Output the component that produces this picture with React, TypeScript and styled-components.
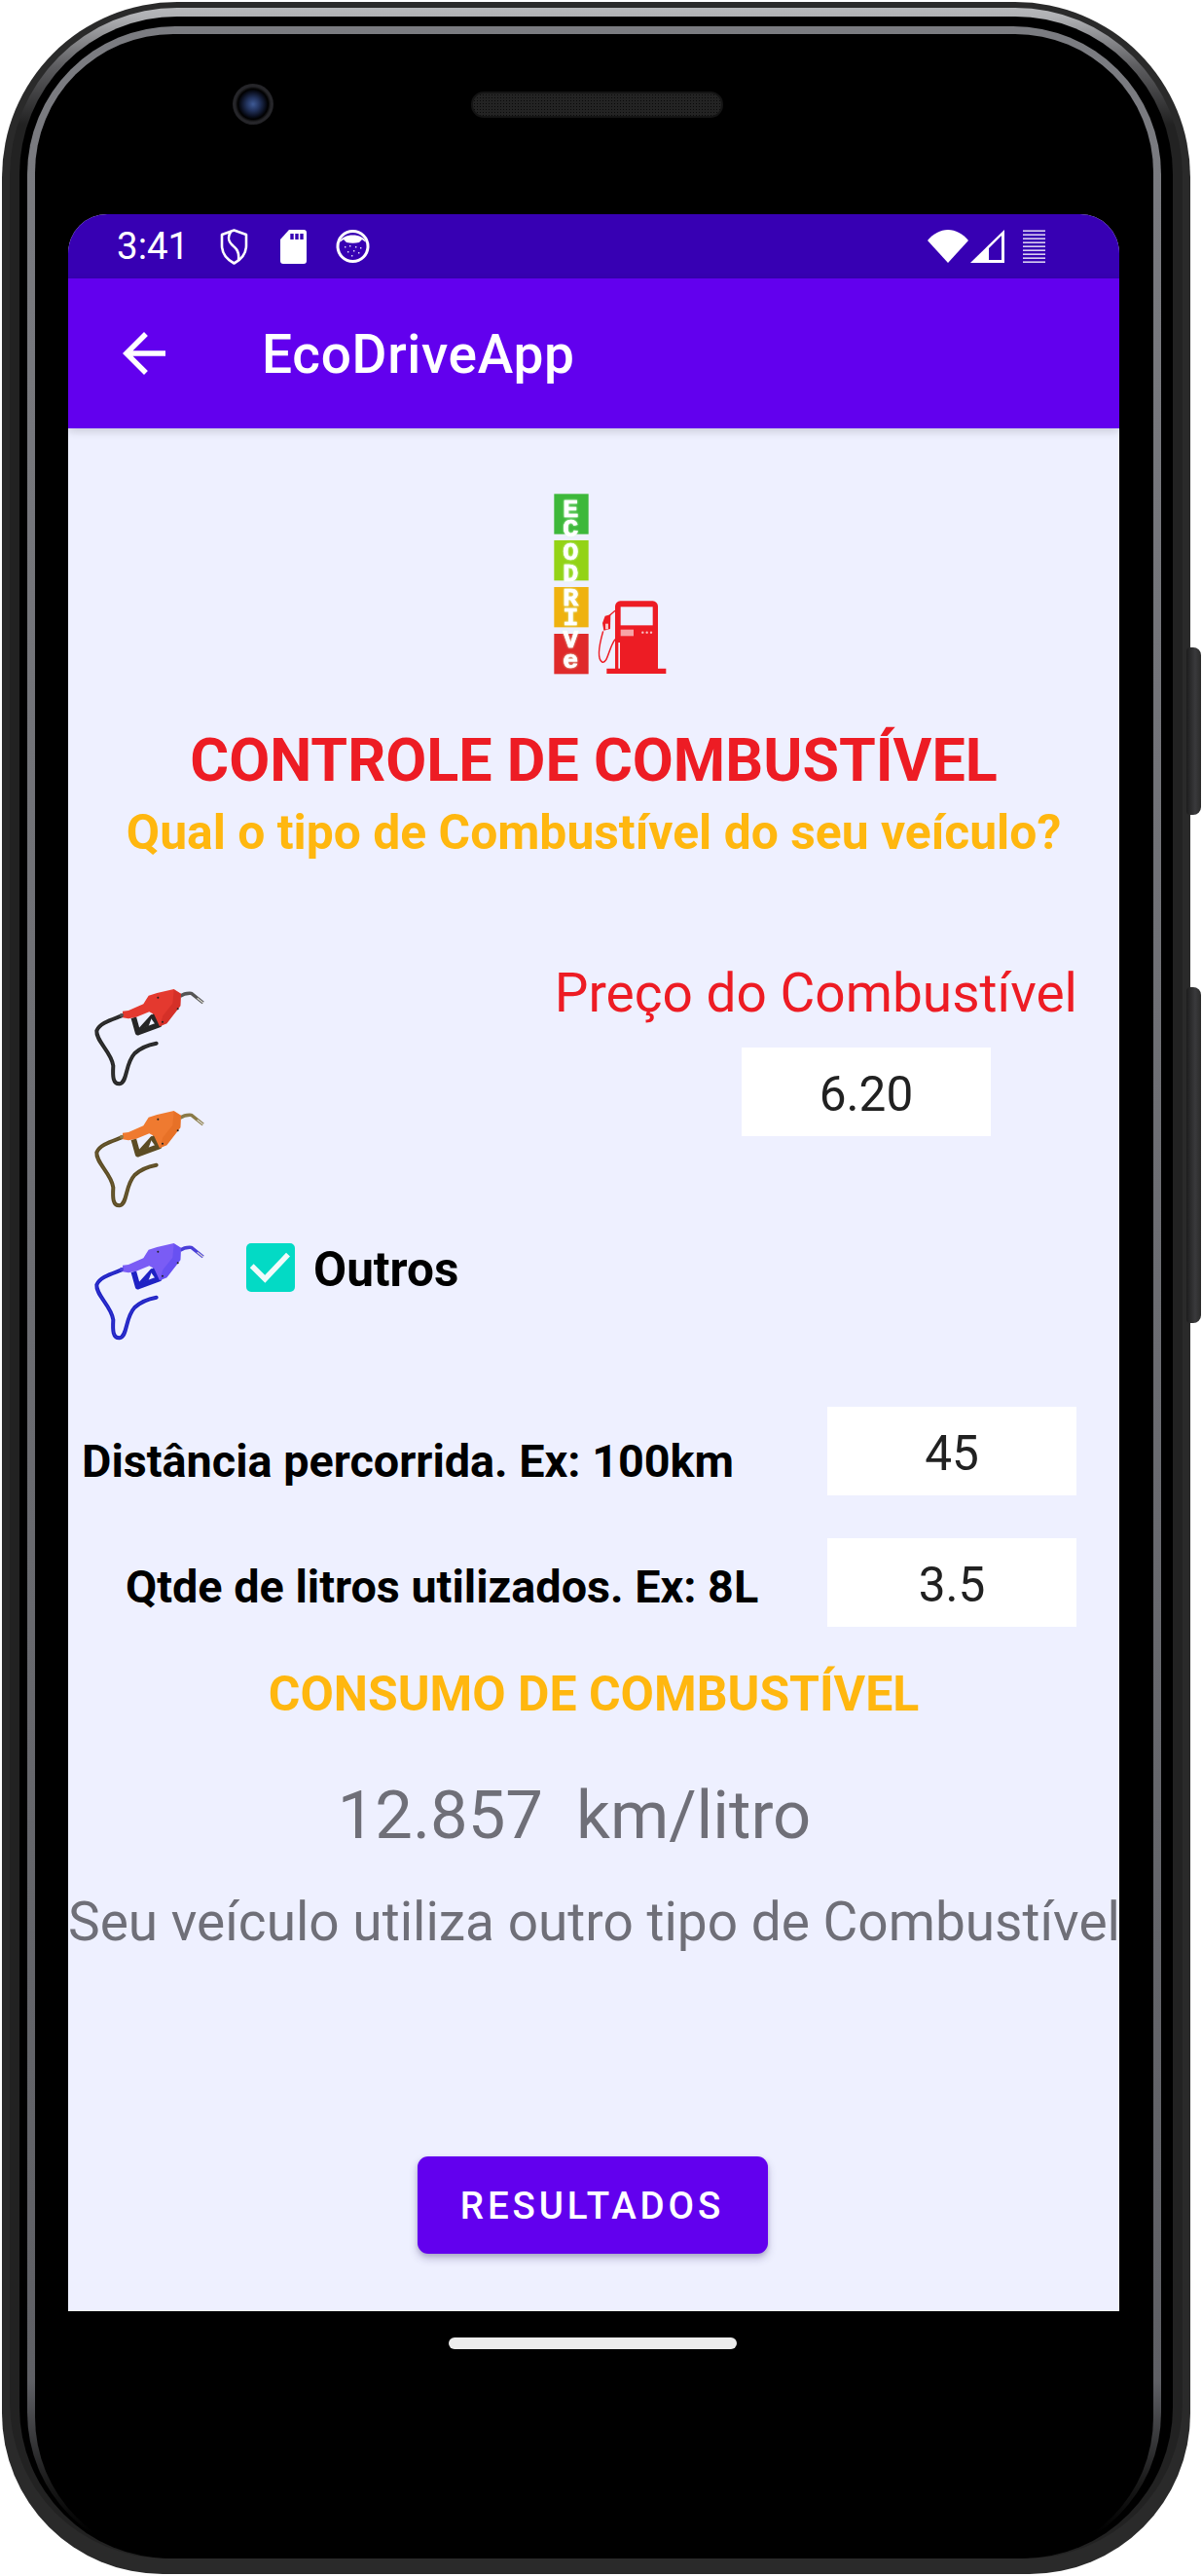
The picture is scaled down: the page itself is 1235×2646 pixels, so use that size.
import { createGlobalStyle, styled } from "styled-components";

const GlobalStyle = createGlobalStyle`
  html, body {
    margin: 0;
    padding: 0;
    background: #fff;
  }
  * {
    box-sizing: border-box;
  }
`;

const FONT = `"Roboto", "Liberation Sans", sans-serif`;

const Page = styled.div`
  width: 1235px;
  height: 2646px;
  padding: 2px 0 0 2px;
  font-family: ${FONT};
  overflow: hidden;
`;

const Shell = styled.div`
  position: relative;
  width: 1221px;
  height: 2642px;
  padding: 6px 8px 16px;
  background: #2a2a2a;
  border-radius: 180px 180px 165px 165px;
`;

const SideKey = styled.div<{ $top: number; $height: number; $width: number }>`
  position: absolute;
  top: ${(p) => p.$top}px;
  right: -${(p) => p.$width}px;
  width: ${(p) => p.$width + 4}px;
  height: ${(p) => p.$height}px;
  border-radius: 4px 8px 8px 4px;
  background: linear-gradient(90deg, #1d1d1d, #3a3a3c 60%, #2a2a2a);
  z-index: 0;
`;

const Rim = styled.div`
  position: relative;
  z-index: 1;
  height: 100%;
  padding: 9px 10px 0;
  border-radius: 172px 172px 160px 160px;
  background: linear-gradient(180deg, #b6b7ba 0, #b0b1b4 9px, #5d5d60 60px, #222 120px);
`;

const RimGap = styled.div`
  height: 100%;
  padding: 10px 12px 0 8px;
  border-radius: 162px 162px 155px 155px;
  background: #000;
`;

const GreyEdge = styled.div`
  height: 100%;
  padding: 8px 8px 0;
  border-radius: 152px 152px 150px 150px;
  background: linear-gradient(180deg, #7b7c81 0, #5f6065 93%, #1a1a1a 97%, #000 99%);
`;

const Bezel = styled.div`
  height: 100%;
  display: flex;
  flex-direction: column;
  border-radius: 142px 142px 145px 145px;
  background: #000;
`;

const SensorRow = styled.div`
  display: flex;
  align-items: center;
  gap: 203px;
  padding: 51px 0 92px 203px;
`;

const Camera = styled.div`
  width: 42px;
  height: 42px;
  border-radius: 50%;
  background: radial-gradient(circle at 50% 50%, #3f5a95 0, #23345f 22%, #0b1020 42%, #000 52%, #26262a 62%, #1e1e22 100%);
`;

const Speaker = styled.div`
  width: 259px;
  height: 27px;
  border-radius: 13px;
  border: 2px solid #141414;
  background-color: #232323;
  background-image: radial-gradient(#0a0a0a 1px, transparent 1px);
  background-size: 3px 3px;
`;

const Screen = styled.div`
  width: 1080px;
  height: 2154px;
  margin-left: 34px;
  display: flex;
  flex-direction: column;
  border-radius: 40px 40px 0 0;
  overflow: hidden;
  background: #eef0ff;
`;

const StatusBar = styled.div`
  height: 66px;
  flex: none;
  display: flex;
  align-items: center;
  padding: 0 76px 0 50px;
  background: #3700b3;
  color: #fff;
`;

const Clock = styled.span`
  font-size: 38.5px;
  line-height: 66px;
`;

const StatusIcon = styled.svg<{ $left: number }>`
  display: block;
  flex: none;
  margin-left: ${(p) => p.$left}px;
`;

const StatusRight = styled.div`
  margin-left: auto;
  display: flex;
  align-items: center;
`;

const AppBar = styled.div`
  position: relative;
  z-index: 2;
  height: 154px;
  flex: none;
  display: flex;
  align-items: center;
  padding-left: 45px;
  background: #6200ee;
  box-shadow: 0 3px 9px rgba(0, 0, 0, 0.16);
  color: #fff;
`;

const BackIcon = styled.svg`
  display: block;
  flex: none;
  width: 66px;
  height: 66px;
  fill: #fff;
`;

const AppTitle = styled.h1`
  margin: 2px 0 0 88px;
  font-size: 55px;
  line-height: 64px;
  font-weight: 500;
  letter-spacing: 0.0125em;
`;

const Content = styled.main`
  flex: 1;
  display: flex;
  flex-direction: column;
  align-items: stretch;
`;

const LogoSvg = styled.svg`
  display: block;
  width: 120px;
  height: 190px;
  margin: 65px 0 0 497px;
`;

const LogoWord = styled.text`
  font-family: "Liberation Mono", monospace;
  font-weight: 700;
  font-size: 80px;
  fill: #fff;
  stroke: #fff;
  stroke-width: 2px;
  text-anchor: middle;
  filter: drop-shadow(0 0 3px rgba(215, 255, 215, 0.9));
`;

const Heading = styled.h2<{ $size: number; $line: number; $top: number; $color: string }>`
  margin: ${(p) => p.$top}px 0 0;
  text-align: center;
  font-size: ${(p) => p.$size}px;
  line-height: ${(p) => p.$line}px;
  font-weight: 700;
  color: ${(p) => p.$color};
  white-space: nowrap;
`;

const FuelSection = styled.section`
  margin-top: 102px;
  display: flex;
  justify-content: space-between;
`;

const FuelList = styled.div`
  display: flex;
  flex-direction: column;
  gap: 10px;
  padding: 23px 0 0 20px;
`;

const FuelRow = styled.div<{ $gap?: number }>`
  display: flex;
  align-items: flex-start;
  margin-top: ${(p) => p.$gap ?? 0}px;
`;

const NozzleSvg = styled.svg`
  display: block;
  flex: none;
  width: 130px;
  height: 115px;
`;

const CheckBox = styled.div`
  width: 50px;
  height: 50px;
  margin: 6px 0 0 33px;
  border-radius: 5px;
  background: #03dac5;
`;

const CheckLabel = styled.span`
  margin: 4px 0 0 19px;
  font-size: 49.5px;
  line-height: 58px;
  font-weight: 700;
  color: #000;
`;

const PriceColumn = styled.div`
  display: flex;
  flex-direction: column;
  align-items: flex-end;
  padding-right: 43px;
`;

const PriceLabel = styled.div`
  margin-top: 1px;
  font-size: 55px;
  line-height: 64px;
  color: #ed1c24;
  white-space: nowrap;
`;

const Field = styled.div<{ $right?: number; $top?: number }>`
  width: 256px;
  height: 91px;
  flex: none;
  margin-top: ${(p) => p.$top ?? 0}px;
  margin-right: ${(p) => p.$right ?? 0}px;
  padding-top: 5px;
  display: flex;
  align-items: center;
  justify-content: center;
  background: #fff;
  font-size: 49.5px;
  color: #212121;
`;

const FormRows = styled.div`
  margin-top: 59px;
  display: flex;
  flex-direction: column;
  gap: 44px;
`;

const FormRow = styled.div<{ $indent: number; $drop: number }>`
  display: flex;
  align-items: flex-start;
  justify-content: space-between;
  padding: 0 44px 0 ${(p) => p.$indent}px;

  & > span {
    margin-top: ${(p) => p.$drop}px;
  }
`;

const FormLabel = styled.span`
  font-size: 46.75px;
  line-height: 52px;
  font-weight: 700;
  color: #000;
  white-space: nowrap;
`;

const ResultText = styled.div<{ $size: number; $line: number; $top: number; $shift?: number }>`
  margin-top: ${(p) => p.$top}px;
  padding-right: ${(p) => p.$shift ?? 0}px;
  text-align: center;
  font-size: ${(p) => p.$size}px;
  line-height: ${(p) => p.$line}px;
  color: #6f6f78;
  white-space: pre;
`;

const ResultButton = styled.button`
  align-self: center;
  width: 360px;
  height: 100px;
  margin: 209px 3px 0 0;
  padding: 0;
  border: 0;
  border-radius: 11px;
  background: #6200ee;
  box-shadow: 0 5px 9px rgba(60, 50, 110, 0.28), 0 2px 4px rgba(60, 50, 110, 0.18);
  color: #fff;
  font-family: ${FONT};
  font-size: 38.5px;
  font-weight: 500;
  letter-spacing: 0.1em;
  text-transform: uppercase;
`;

const HomeBar = styled.div`
  width: 296px;
  height: 12px;
  margin: 27px 0 0 425px;
  border-radius: 6px;
  background: #ececec;
`;

const HOSE_PATH =
  "M105 100 C72 113 38 122 28 146 C25 178 74 212 79 254 C77 288 78 310 98 310 C124 306 114 250 145 216 C165 197 190 189 212 185";

const Nozzle = ({
  body,
  bodyDark,
  hose,
  shine,
  spout,
}: {
  body: string;
  bodyDark: string;
  hose: string;
  shine: string;
  spout: string;
}) => (
  <NozzleSvg viewBox="0 0 390 345">
    <path d={HOSE_PATH} fill="none" stroke={hose} strokeWidth="12" strokeLinecap="round" />
    <path d={HOSE_PATH} fill="none" stroke={shine} strokeWidth="2" strokeLinecap="round" opacity="0.3" />
    <path d="M285 40 C296 32 308 30 320 31 L356 60" fill="none" stroke={spout} strokeWidth="10" strokeLinejoin="round" />
    <path d="M338 46 L356 60" fill="none" stroke="#d8d8d0" strokeWidth="4" />
    <path d="M142 106 L155 152 L220 128 L198 97" fill="none" stroke={hose} strokeWidth="17" strokeLinejoin="round" />
    <path d="M158 142 L198 98 L186 130 Z" fill={hose} stroke={hose} strokeWidth="5" />
    <path
      d="M108 86 L126 84 L172 64 L188 38 L214 30 L266 18 L288 32 L286 70 L244 124 L222 133 L205 96 L190 88 L150 104 L126 109 L108 106 Z"
      fill={body}
    />
    <path d="M266 20 L288 32 L286 70 L244 124 L222 133 L232 100 L262 62 Z" fill={bodyDark} opacity="0.55" />
    <circle cx="217" cy="44" r="3" fill="#222" />
    <circle cx="278" cy="79" r="3" fill="#222" />
    <circle cx="231" cy="119" r="3" fill="#222" />
    <circle cx="105" cy="98" r="6" fill={spout} />
  </NozzleSvg>
);

const LOGO_BLOCKS: [number, string][] = [
  [82, "#3db83a"],
  [225, "#93d316"],
  [369, "#efb20f"],
  [513, "#df2a2a"],
];

const Logo = () => (
  <LogoSvg viewBox="140 75 360 570">
    {LOGO_BLOCKS.map(([y, color]) => (
      <rect key={y} x="147" y={y} width="106" height="124" fill={color} />
    ))}
    <LogoWord x="198 198 198 198 198 198 198 198" y="152 214 285 350 425 487 554 618">
      ECODRIVe
    </LogoWord>
    <path
      d="M335 428 a16 16 0 0 1 16 -16 H451 a16 16 0 0 1 16 16 V620 H492 V636 H309 V620 H335 Z"
      fill="#ed1c24"
    />
    <rect x="352" y="430" width="99" height="57" fill="#eef0ff" />
    <rect x="352" y="500" width="40" height="20" fill="#f7a3a6" />
    <rect x="345" y="540" width="5" height="80" fill="#eef0ff" />
    <circle cx="420" cy="509" r="3.5" fill="#f7c4c6" />
    <circle cx="433" cy="509" r="3.5" fill="#f7c4c6" />
    <circle cx="446" cy="509" r="3.5" fill="#f7c4c6" />
    <path d="M335 442 L316 458" stroke="#ed1c24" strokeWidth="4" fill="none" />
    <path d="M304 458 L321 454 L320 498 L300 503 L296 480 Z" fill="#ed1c24" />
    <rect x="305" y="482" width="9" height="17" fill="#f7c4c6" />
    <path d="M298 505 C288 540 278 590 295 600 C312 606 314 560 335 530" fill="none" stroke="#ed1c24" strokeWidth="4.5" />
  </LogoSvg>
);

export default function App() {
  return (
    <>
      <GlobalStyle />
      <Page>
        <Shell>
          <SideKey $top={663} $height={172} $width={11} />
          <SideKey $top={1012} $height={345} $width={11} />
          <Rim>
            <RimGap>
              <GreyEdge>
                <Bezel>
                  <SensorRow>
                    <Camera />
                    <Speaker />
                  </SensorRow>
                  <Screen>
                    <StatusBar>
                      <Clock>3:41</Clock>
                      <StatusIcon $left={32} width="29" height="37" viewBox="0 0 29 37">
                        <path
                          d="M14.5 1.5 L27 6 V17 C27 26 21 32 14.5 35.5 C8 32 2 26 2 17 V6 Z"
                          fill="none"
                          stroke="#fff"
                          strokeWidth="2.6"
                          strokeLinejoin="round"
                        />
                        <path d="M11 3 C7 10 9 14 14 18 C18 21 20 25 19 32" fill="none" stroke="#fff" strokeWidth="2.6" />
                      </StatusIcon>
                      <StatusIcon $left={33} width="27" height="35" viewBox="0 0 27 35">
                        <path d="M9 0 H24 a3 3 0 0 1 3 3 V32 a3 3 0 0 1 -3 3 H3 a3 3 0 0 1 -3 -3 V10 Z" fill="#fff" />
                        <path d="M10.3 4 h3.4 v6 h-3.4z M15.3 4 h3.4 v6 h-3.4z M20.3 4 h3.4 v6 h-3.4z" fill="#3700b3" />
                      </StatusIcon>
                      <StatusIcon $left={30} width="35" height="34" viewBox="0 0 35 34">
                        <circle cx="17.5" cy="17" r="15.5" fill="#3700b3" stroke="#fff" strokeWidth="3" />
                        <path d="M4 13 C6 3 29 3 31 13 L27 10 L24 13 C20 14 15 14 11 13 L8 10 Z" fill="#fff" />
                        <path
                          d="M9 17h1.4v1.4H9z M14 16h1.4v1.4H14z M20 17h1.4v1.4H20z M25 18h1.4v1.4H25z M12 22h1.4v1.4H12z M18 21h1.4v1.4H18z M23 23h1.4v1.4H23z M16 26h1.4v1.4H16z"
                          fill="#e0d8f8"
                        />
                      </StatusIcon>
                      <StatusRight>
                        <StatusIcon $left={0} width="42" height="34" viewBox="0 0 42 34">
                          <path d="M21 34 L0 11 C6 4 13 0 21 0 C29 0 36 4 42 11 Z" fill="#fff" />
                        </StatusIcon>
                        <StatusIcon $left={2} width="35" height="34" viewBox="0 0 35 34">
                          <path d="M35 0 V34 H0 Z" fill="#fff" />
                          <path d="M19 31 H32 V6 L19 19 Z" fill="#3700b3" />
                        </StatusIcon>
                        <StatusIcon $left={19} width="23" height="34" viewBox="0 0 23 34">
                          {[0, 1, 2, 3, 4, 5, 6, 7, 8].map((i) => (
                            <rect key={i} x="0" y={i * 4 + 0.5} width="23" height="1.3" fill="#fff" />
                          ))}
                        </StatusIcon>
                      </StatusRight>
                    </StatusBar>
                    <AppBar>
                      <BackIcon viewBox="0 0 24 24">
                        <path d="M20 11H7.83l5.59-5.59L12 4l-8 8 8 8 1.41-1.41L7.83 13H20v-2z" />
                      </BackIcon>
                      <AppTitle>EcoDriveApp</AppTitle>
                    </AppBar>
                    <Content>
                      <Logo />
                      <Heading $size={61} $line={70} $top={51} $color="#ed1c24">
                        CONTROLE DE COMBUSTÍVEL
                      </Heading>
                      <Heading $size={49.8} $line={60} $top={9} $color="#ffb70f">
                        Qual o tipo de Combustível do seu veículo?
                      </Heading>
                      <FuelSection>
                        <FuelList>
                          <FuelRow>
                            <Nozzle body="#e4392f" bodyDark="#c92a22" hose="#262626" shine="#777" spout="#555" />
                          </FuelRow>
                          <FuelRow>
                            <Nozzle body="#ef7a30" bodyDark="#e06a20" hose="#5c4c24" shine="#b7a878" spout="#8a7a48" />
                          </FuelRow>
                          <FuelRow $gap={11}>
                            <Nozzle body="#7a5cf5" bodyDark="#5a48ee" hose="#1f22c4" shine="#8f90ff" spout="#4a3fd8" />
                            <CheckBox>
                              <svg width="50" height="50" viewBox="0 0 50 50">
                                <path d="M5.7 23.3 L19.3 36.7 L43 11.7" fill="none" stroke="#f1fbfb" strokeWidth="5.5" />
                              </svg>
                            </CheckBox>
                            <CheckLabel>Outros</CheckLabel>
                          </FuelRow>
                        </FuelList>
                        <PriceColumn>
                          <PriceLabel>Preço do Combustível</PriceLabel>
                          <Field $top={24} $right={89}>
                            6.20
                          </Field>
                        </PriceColumn>
                      </FuelSection>
                      <FormRows>
                        <FormRow $indent={14} $drop={30}>
                          <FormLabel>Distância percorrida. Ex: 100km</FormLabel>
                          <Field>45</Field>
                        </FormRow>
                        <FormRow $indent={59} $drop={24}>
                          <FormLabel>Qtde de litros utilizados. Ex: 8L</FormLabel>
                          <Field>3.5</Field>
                        </FormRow>
                      </FormRows>
                      <Heading $size={49.9} $line={58} $top={40} $color="#ffb70f">
                        CONSUMO DE COMBUSTÍVEL
                      </Heading>
                      <ResultText $size={68.75} $line={84} $top={54} $shift={40}>
                        12.857  km/litro
                      </ResultText>
                      <ResultText $size={55} $line={64} $top={35}>
                        Seu veículo utiliza outro tipo de Combustível
                      </ResultText>
                      <ResultButton>Resultados</ResultButton>
                    </Content>
                  </Screen>
                  <HomeBar />
                </Bezel>
              </GreyEdge>
            </RimGap>
          </Rim>
        </Shell>
      </Page>
    </>
  );
}
